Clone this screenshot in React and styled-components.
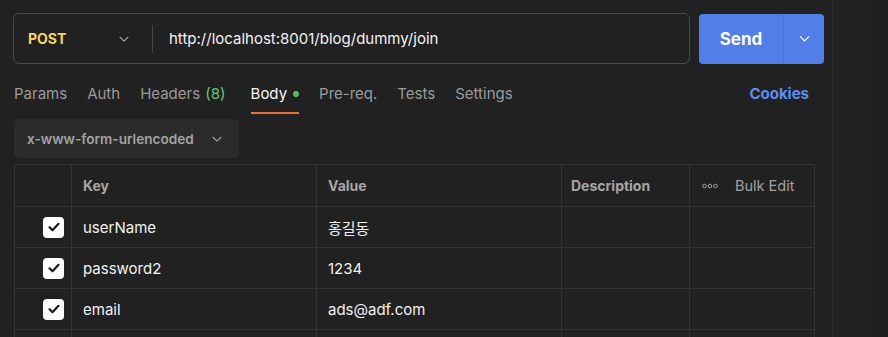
import React from 'react';
import styled, { createGlobalStyle } from 'styled-components';

const GlobalStyle = createGlobalStyle`
  html, body {
    margin: 0;
    padding: 0;
    background: #212121;
  }
  body {
    font-family: Inter, "Noto Sans CJK KR", "Noto Sans", sans-serif;
    color: #e6e6e6;
  }
`;

const Page = styled.div`
  display: flex;
  width: 888px;
  height: 337px;
  overflow: hidden;
  background: #212121;
`;

const Main = styled.div`
  width: 833px;
  flex: none;
  border-right: 1px solid #2c2c2c;
  padding: 13px 0 0 13px;
  box-sizing: border-box;
`;

const SidePanel = styled.div`
  flex: 1;
  background: linear-gradient(90deg, #222 0%, #212121 60%, #1e1e1e 100%);
`;

const TopRow = styled.div`
  display: flex;
  align-items: center;
  gap: 9px;
`;

const UrlBox = styled.div`
  display: flex;
  align-items: center;
  width: 677px;
  height: 51px;
  box-sizing: border-box;
  border: 1px solid #4a4a4a;
  border-radius: 6px;
`;

const Method = styled.div`
  display: flex;
  align-items: center;
  justify-content: space-between;
  width: 138px;
  box-sizing: border-box;
  padding: 0 21px 0 14px;
  font-size: 14px;
  font-weight: 700;
  color: #f6d65c;
`;

const Divider = styled.div`
  width: 1px;
  height: 28px;
  background: #454545;
`;

const UrlText = styled.div`
  padding-left: 16px;
  font-size: 15px;
  color: #f2f2f2;
`;

const SendGroup = styled.div`
  display: flex;
  height: 50px;
  border-radius: 4px;
  overflow: hidden;
  background: #517ee8;
`;

const SendMain = styled.div`
  display: flex;
  align-items: center;
  justify-content: center;
  width: 84px;
  font-size: 17px;
  font-weight: 700;
  color: #fff;
  border-right: 1px solid #4a72d4;
`;

const SendArrow = styled.div`
  display: flex;
  align-items: center;
  justify-content: center;
  width: 40px;
`;

const TabsRow = styled.div`
  display: flex;
  align-items: center;
  justify-content: space-between;
  margin-top: 12px;
  width: 800px;
  padding-left: 1px;
  height: 38px;
  box-sizing: border-box;
`;

const Tabs = styled.div`
  display: flex;
  gap: 20px;
  height: 100%;
`;

const Tab = styled.div`
  position: relative;
  display: flex;
  align-items: center;
  gap: 6px;
  padding-bottom: 3px;
  box-sizing: border-box;
  font-size: 15px;
  color: ${p => (p.$active ? '#f5f5f5' : '#9b9b9b')};

  &::after {
    content: '';
    display: ${p => (p.$active ? 'block' : 'none')};
    position: absolute;
    left: 0;
    right: 0;
    bottom: 0;
    height: 2px;
    background: #e96d3d;
  }
`;

const Count = styled.span`
  margin-left: 1px;
  margin-right: 5px;
  color: #6bc473;
`;

const Dot = styled.span`
  width: 6px;
  height: 6px;
  border-radius: 50%;
  background: #5cb85c;
`;

const Cookies = styled.div`
  padding: 0 4px 3px 0;
  font-size: 15px;
  font-weight: 700;
  color: #5b8ff0;
`;

const BodyType = styled.div`
  display: flex;
  align-items: center;
  justify-content: space-between;
  margin: 5px 0 0 1px;
  width: 225px;
  height: 39px;
  box-sizing: border-box;
  padding: 0 15px 0 13px;
  background: #2b2b2b;
  border-radius: 5px;
  font-size: 13.6px;
  font-weight: 600;
  color: #a3a3a3;
`;

const Table = styled.div`
  margin: 6px 0 0 1px;
  width: 800px;
  border-top: 1px solid #333;
  border-left: 1px solid #333;
  display: grid;
  grid-template-columns: 57px 245px 245px 128px 125px;
  grid-auto-rows: 41px;
  grid-template-rows: 42px;
`;

const Cell = styled.div`
  display: flex;
  align-items: center;
  box-sizing: border-box;
  padding: 0 11px;
  border-right: 1px solid #333;
  border-bottom: 1px solid #333;
  font-size: 15px;
  color: #f2f2f2;
  justify-content: ${p => (p.$end ? 'flex-end' : 'flex-start')};
`;

const HeadCell = styled(Cell)`
  font-size: 14px;
  font-weight: 700;
  color: #a6a6a6;
`;

const DescHead = styled(HeadCell)`
  padding-left: 9px;
`;

const BulkCell = styled(Cell)`
  gap: 17px;
  padding-left: 12px;
  font-size: 14.5px;
  color: #a3a3a3;
`;

const Check = styled.div`
  display: flex;
  align-items: center;
  justify-content: center;
  width: 21px;
  height: 21px;
  margin-right: -4px;
  border-radius: 4px;
  background: #fff;
`;

const Chevron = ({ color = '#a0a0a0', size = 14 }) => (
  <svg width={size} height={size} viewBox="0 0 16 16" fill="none">
    <path d="M3.5 6l4.5 4.5L12.5 6" stroke={color} strokeWidth="1.3" strokeLinecap="round" strokeLinejoin="round" />
  </svg>
);

const Dots = () => (
  <svg width="16" height="6" viewBox="0 0 16 6" fill="none">
    <circle cx="2.5" cy="3" r="1.8" stroke="#a0a0a0" strokeWidth="1" />
    <circle cx="8" cy="3" r="1.8" stroke="#a0a0a0" strokeWidth="1" />
    <circle cx="13.5" cy="3" r="1.8" stroke="#a0a0a0" strokeWidth="1" />
  </svg>
);

const CheckIcon = () => (
  <svg width="14" height="14" viewBox="0 0 14 14" fill="none">
    <path d="M2.5 7.2l3 3 6-6.4" stroke="#1a1a1a" strokeWidth="2.2" strokeLinecap="round" strokeLinejoin="round" />
  </svg>
);

const rows = [
  { key: 'userName', value: '홍길동' },
  { key: 'password2', value: '1234' },
  { key: 'email', value: 'ads@adf.com' },
];

const App = () => {
  return (
    <Page>
      <GlobalStyle />
      <Main>
        <TopRow>
          <UrlBox>
            <Method>
              POST
              <Chevron />
            </Method>
            <Divider />
            <UrlText>http://localhost:8001/blog/dummy/join</UrlText>
          </UrlBox>
          <SendGroup>
            <SendMain>Send</SendMain>
            <SendArrow>
              <Chevron color="#ffffff" size={15} />
            </SendArrow>
          </SendGroup>
        </TopRow>

        <TabsRow>
          <Tabs>
            <Tab>Params</Tab>
            <Tab>Auth</Tab>
            <Tab>
              <span>
                Headers <Count>(8)</Count>
              </span>
            </Tab>
            <Tab $active>
              Body
              <Dot />
            </Tab>
            <Tab>Pre-req.</Tab>
            <Tab>Tests</Tab>
            <Tab>Settings</Tab>
          </Tabs>
          <Cookies>Cookies</Cookies>
        </TabsRow>

        <BodyType>
          x-www-form-urlencoded
          <Chevron />
        </BodyType>

        <Table>
          <HeadCell />
          <HeadCell>Key</HeadCell>
          <HeadCell>Value</HeadCell>
          <DescHead>Description</DescHead>
          <BulkCell>
            <Dots />
            Bulk Edit
          </BulkCell>
          {rows.map(row => (
            <React.Fragment key={row.key}>
              <Cell $end>
                <Check>
                  <CheckIcon />
                </Check>
              </Cell>
              <Cell>{row.key}</Cell>
              <Cell>{row.value}</Cell>
              <Cell />
              <Cell />
            </React.Fragment>
          ))}
          <Cell />
          <Cell />
          <Cell />
          <Cell />
          <Cell />
        </Table>
      </Main>
      <SidePanel />
    </Page>
  );
};

export default App;
